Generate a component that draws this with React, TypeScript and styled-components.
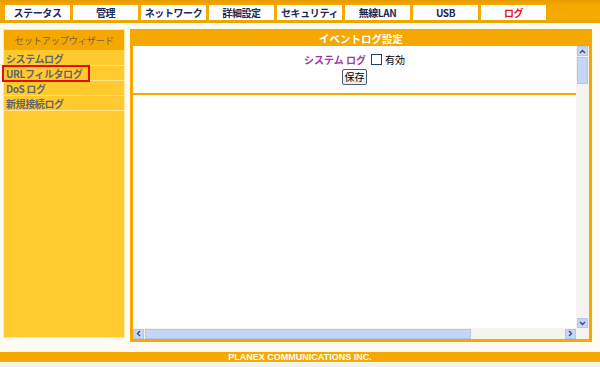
import styled, { createGlobalStyle } from "styled-components";

const GlobalStyle = createGlobalStyle`
  html, body {
    margin: 0;
    padding: 0;
    background: #fdfaf1;
  }
  body {
    font-family: "Noto Sans CJK JP", "Noto Sans", "Liberation Sans", sans-serif;
  }
`;

const Page = styled.div`
  width: 600px;
  height: 367px;
  display: flex;
  flex-direction: column;
  overflow: hidden;
  background: #fdfaf1;
`;

const TopBar = styled.div`
  height: 23px;
  flex-shrink: 0;
  box-sizing: border-box;
  padding: 5px 0 0 5px;
  display: flex;
  gap: 3px;
  background: linear-gradient(to bottom, #e99a00 0px, #f3a800 5px, #f5ac00 18px, #e9a200 23px);
`;

const Tab = styled.div<{ $active?: boolean }>`
  width: 65px;
  height: 15px;
  background: #ffffff;
  display: flex;
  align-items: center;
  justify-content: center;
  font-size: 10px;
  letter-spacing: -0.4px;
  white-space: nowrap;
  font-weight: bold;
  color: ${({ $active }) => ($active ? "#ee1111" : "#1c2a5a")};
  line-height: 1;
`;

const Main = styled.div`
  display: flex;
  align-items: flex-start;
  gap: 5px;
  padding: 6px 3px 0 3px;
  height: 321px;
  flex-shrink: 0;
  box-sizing: border-box;
`;

const SideMenu = styled.div`
  width: 122px;
  height: 309px;
  box-sizing: border-box;
  background: #ffca2e;
  border: 1px solid #fbe7a6;
  display: flex;
  flex-direction: column;
`;

const MenuHeader = styled.div`
  height: 20px;
  background: #f5a800;
  color: #74644f;
  font-size: 9.5px;
  letter-spacing: -0.5px;
  display: flex;
  align-items: center;
  justify-content: center;
  margin-bottom: 1px;
`;

const MenuItem = styled.div<{ $selected?: boolean }>`
  height: 15px;
  box-sizing: border-box;
  border-bottom: 1px solid #ffe38e;
  font-size: 10px;
  letter-spacing: -0.4px;
  font-weight: bold;
  color: #666666;
  display: flex;
  align-items: center;
  padding-left: 2px;
  position: relative;
  &::after {
    content: "";
    display: ${({ $selected }) => ($selected ? "block" : "none")};
    position: absolute;
    left: -2px;
    top: -1px;
    width: 84px;
    height: 13px;
    border: 2px solid #e20d0d;
  }
`;

const ContentPanel = styled.div`
  width: 462px;
  height: 313px;
  box-sizing: border-box;
  border: 3px solid #f5a800;
  border-top-width: 1px;
  display: flex;
  flex-direction: column;
  background: #f5a800;
`;

const PanelHeader = styled.div`
  height: 16px;
  color: #ffffff;
  font-size: 10.5px;
  font-weight: bold;
  display: flex;
  align-items: center;
  justify-content: center;
`;

const Frame = styled.div`
  flex: 1;
  display: grid;
  grid-template-columns: 1fr 12px;
  grid-template-rows: 1fr 11px;
  background: #ffffff;
  border-right: 1px solid #f3f1ea;
`;

const FrameBody = styled.div`
  display: flex;
  flex-direction: column;
  align-items: center;
  padding-top: 6px;
  font-size: 10px;
`;

const OptionRow = styled.div`
  display: flex;
  align-items: center;
  gap: 3px;
  height: 14px;
`;

const OptionLabel = styled.span`
  color: #9b3aa2;
  font-weight: bold;
  margin-right: 2px;
`;

const Check = styled.span`
  width: 9px;
  height: 9px;
  border: 1px solid #1c3f6e;
  background: #ffffff;
  display: inline-block;
`;

const SaveButton = styled.button`
  margin-top: 3px;
  width: 25px;
  height: 16px;
  padding: 0;
  font-family: inherit;
  font-size: 10px;
  color: #000;
  background: linear-gradient(#ffffff, #ecebe6);
  border: 1px solid #4a5d7a;
  border-radius: 2px;
  line-height: 1;
`;

const Divider = styled.div`
  align-self: stretch;
  height: 2px;
  margin-top: 8px;
  background: #f5a800;
`;

const VTrack = styled.div`
  background: #f4f3ee;
  display: flex;
  flex-direction: column;
  align-items: center;
`;

const HTrack = styled.div`
  background: #f4f3ee;
  display: flex;
  align-items: center;
`;

const ArrowButton = styled.div`
  width: 11px;
  height: 10px;
  background: #c5d5f8;
  border: 1px solid #b3c6ee;
  box-sizing: border-box;
  display: flex;
  align-items: center;
  justify-content: center;
  flex-shrink: 0;
`;

const VThumb = styled.div`
  width: 11px;
  height: 27px;
  margin-top: 1px;
  background: #c5d5f8;
  border: 1px solid #b3c6ee;
  box-sizing: border-box;
`;

const HThumb = styled.div`
  width: 326px;
  height: 10px;
  margin-left: 1px;
  background: #c5d5f8;
  border: 1px solid #b3c6ee;
  box-sizing: border-box;
`;

const Spacer = styled.div`
  flex: 1;
`;

const Corner = styled.div`
  background: #f4f3ee;
`;

const Footer = styled.div`
  margin-top: 8px;
  height: 10px;
  flex-shrink: 0;
  background: #f5a800;
  color: #ffffff;
  font-family: "Liberation Sans", Arial, sans-serif;
  font-size: 9px;
  font-weight: bold;
  display: flex;
  align-items: center;
  justify-content: center;
  line-height: 1;
`;

const Bottom = styled.div`
  flex: 1;
  background: #f2f1ec;
  margin-top: 1px;
`;

const Chevron = ({ dir }: { dir: "up" | "down" | "left" | "right" }) => {
  const rot = { up: 0, right: 90, down: 180, left: 270 }[dir];
  return (
    <svg width="7" height="7" viewBox="0 0 7 7" style={{ transform: `rotate(${rot}deg)` }}>
      <path d="M1 5 L3.5 2.5 L6 5" fill="none" stroke="#3a4d78" strokeWidth="1.4" />
    </svg>
  );
};

const tabs = ["ステータス", "管理", "ネットワーク", "詳細設定", "セキュリティ", "無線LAN", "USB", "ログ"];
const menu = ["システムログ", "URLフィルタログ", "DoS ログ", "新規接続ログ"];

export default function App() {
  return (
    <Page>
      <GlobalStyle />
      <TopBar>
        {tabs.map((t) => (
          <Tab key={t} $active={t === "ログ"}>
            {t}
          </Tab>
        ))}
      </TopBar>
      <Main>
        <SideMenu>
          <MenuHeader>セットアップウィザード</MenuHeader>
          {menu.map((m) => (
            <MenuItem key={m} $selected={m === "URLフィルタログ"}>
              {m}
            </MenuItem>
          ))}
        </SideMenu>
        <ContentPanel>
          <PanelHeader>イベントログ設定</PanelHeader>
          <Frame>
            <FrameBody>
              <OptionRow>
                <OptionLabel>システム ログ</OptionLabel>
                <Check />
                <span>有効</span>
              </OptionRow>
              <SaveButton>保存</SaveButton>
              <Divider />
            </FrameBody>
            <VTrack>
              <ArrowButton>
                <Chevron dir="up" />
              </ArrowButton>
              <VThumb />
              <Spacer />
              <ArrowButton>
                <Chevron dir="down" />
              </ArrowButton>
            </VTrack>
            <HTrack>
              <ArrowButton>
                <Chevron dir="left" />
              </ArrowButton>
              <HThumb />
              <Spacer />
              <ArrowButton>
                <Chevron dir="right" />
              </ArrowButton>
            </HTrack>
            <Corner />
          </Frame>
        </ContentPanel>
      </Main>
      <Footer>PLANEX COMMUNICATIONS INC.</Footer>
      <Bottom />
    </Page>
  );
}
